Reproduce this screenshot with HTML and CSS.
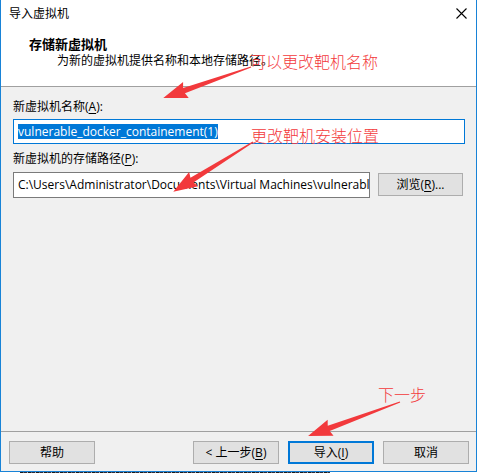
FILE: index.html
```html
<!DOCTYPE html>
<html lang="zh-CN">
<head>
<meta charset="utf-8">
<title>导入虚拟机</title>
<link rel="stylesheet" href="styles.css">
</head>
<body>
<div class="window">
  <div class="titlebar">
    <span class="title">导入虚拟机</span>
    <svg class="close" width="11" height="11" viewBox="0 0 11 11"><path d="M0.5 0.5L10.5 10.5M10.5 0.5L0.5 10.5" stroke="#000" stroke-width="1.1" fill="none"/></svg>
  </div>
  <div class="header">
    <div class="h-title">存储新虚拟机</div>
    <div class="h-sub">为新的虚拟机提供名称和本地存储路径。</div>
  </div>
  <div class="body">
    <div class="lbl">新虚拟机名称(<u>A</u>):</div>
    <div class="input focus"><span class="sel">vulnerable_docker_containement(1)</span></div>
    <div class="lbl lbl2">新虚拟机的存储路径(<u>P</u>):</div>
    <div class="row">
      <div class="input path">C:\Users\Administrator\Documents\Virtual Machines\vulnerable_docker_containement(1)</div>
      <button class="btn browse">浏览(<u>R</u>)...</button>
    </div>
  </div>
  <div class="footer">
    <button class="btn">帮助</button>
    <div class="spacer"></div>
    <button class="btn">&lt; 上一步(<u>B</u>)</button>
    <button class="btn default">导入(<u>I</u>)</button>
    <button class="btn">取消</button>
  </div>
</div>
<div class="desk"></div>

<svg class="annot" width="480" height="473" viewBox="0 0 480 473">
  <g fill="#f2393c">
    <polygon transform="translate(251,67) rotate(160.6)" points="0,-0.6 71,-2.8 69,-8.5 93,0 69,8.5 71,2.8 0,0.6"/>
    <polygon transform="translate(253,142) rotate(148)" points="0,-0.6 72,-2.8 70,-8.5 94,0 70,8.5 72,2.8 0,0.6"/>
    <polygon transform="translate(400,402) rotate(159.7)" points="0,-0.6 76,-2.8 74,-8.5 98,0 74,8.5 76,2.8 0,0.6"/>
  </g>
</svg>
<div class="note n1">可以更改靶机名称</div>
<div class="note n2">更改靶机安装位置</div>
<div class="note n3">下一步</div>
</body>
</html>
```

FILE: styles.css
```css
* { box-sizing: border-box; }
html, body {
  margin: 0;
  padding: 0;
}
body {
  width: 480px;
  height: 473px;
  background: #fff;
  font-family: "Open Sans", "Noto Sans CJK SC", sans-serif;
  font-size: 12px;
  line-height: 16px;
  color: #000;
  position: relative;
  overflow: hidden;
}
u { text-decoration: underline; text-underline-offset: 2px; }

.window {
  width: 477px;
  height: 472px;
  border: 1px solid #1883d7;
  border-top: none;
  display: flex;
  flex-direction: column;
  background: #f0f0f0;
}

.titlebar {
  height: 30px;
  background: #fff;
  display: flex;
  align-items: center;
  justify-content: space-between;
  padding: 0 9px 2px 8px;
}
.title { font-size: 12px; }
.close { display: block; margin-top: -1px; }

.header {
  height: 57px;
  background: #fff;
  border-bottom: 1px solid #a0a0a0;
  padding: 6px 0 0 28px;
}
.h-title {
  font-weight: bold;
  font-size: 13px;
  line-height: 16px;
}
.h-sub {
  margin-top: 1px;
  padding-left: 28px;
}

.body {
  flex: 1;
  padding: 12px 12px 0 12px;
}
.lbl { height: 16px; }
.lbl2 { margin-top: 7px; }

.input {
  height: 25px;
  background: #fff;
  border: 1px solid #7a7a7a;
  padding: 0 4px;
  display: flex;
  align-items: center;
  white-space: nowrap;
  overflow: hidden;
}
.input.focus {
  margin-top: 4px;
  margin-right: -1px;
  border-color: #0078d7;
}
.sel {
  background: #0078d7;
  color: #fff;
  line-height: 15px;
}
.row {
  margin-top: 5px;
  display: flex;
  align-items: flex-start;
}
.input.path {
  width: 357px;
  height: 26px;
}

.btn {
  font: inherit;
  height: 23px;
  width: 86px;
  background: #e1e1e1;
  border: 1px solid #adadad;
  padding: 0;
  color: #000;
  display: flex;
  align-items: center;
  justify-content: center;
}
.browse {
  margin-left: 8px;
  margin-top: 1px;
  width: 85px;
}
.btn.default { border: 2px solid #0078d7; }

.footer {
  height: 40px;
  border-top: 1px solid #a0a0a0;
  padding: 9px 7px 7px 8px;
  display: flex;
  gap: 9px;
}
.spacer { flex: 1; }

.desk {
  height: 1px;
  margin-left: 20px;
  width: 310px;
  background: repeating-linear-gradient(90deg, #1a1a1a 0 3px, #6a6a6a 3px 4px, #2a2a3a 4px 7px, #b0b0b0 7px 8px);
}

.annot {
  position: absolute;
  left: 0;
  top: 0;
  pointer-events: none;
}
.note {
  position: absolute;
  color: #f3393b;
  font-family: "Noto Sans CJK SC", sans-serif;
  font-size: 16px;
  line-height: 16px;
  font-weight: 300;
  white-space: nowrap;
}
.n1 { left: 250px; top: 53px; }
.n2 { left: 251px; top: 127px; }
.n3 { left: 378px; top: 386px; }
```
